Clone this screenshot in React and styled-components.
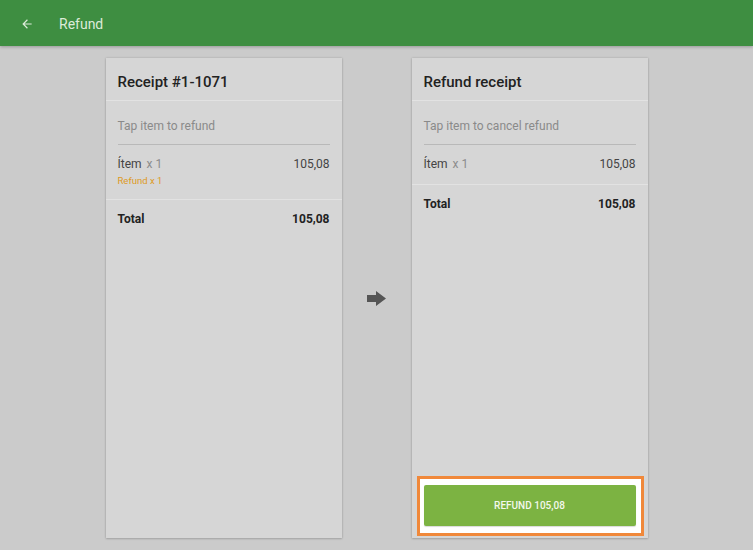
import styled, { createGlobalStyle } from "styled-components";

const GlobalStyle = createGlobalStyle`
  html, body {
    margin: 0;
    padding: 0;
    height: 100%;
    background: #cbcbcb;
    font-family: Roboto, "Noto Sans", "Liberation Sans", sans-serif;
  }
  #root {
    height: 100%;
  }
`;

const Page = styled.div`
  height: 550px;
  display: flex;
  flex-direction: column;
  background: #cbcbcb;
`;

const AppBar = styled.header`
  height: 46px;
  flex: none;
  background: #3e8e41;
  display: flex;
  align-items: center;
  padding: 2px 0 0 20px;
  box-sizing: border-box;
  box-shadow: 0 1px 3px rgba(0, 0, 0, 0.25);
  position: relative;
  z-index: 1;
`;

const BackButton = styled.div`
  width: 14px;
  height: 14px;
  display: flex;
  margin-right: 25px;
`;

const BarTitle = styled.h1`
  margin: 0;
  font-size: 14px;
  font-weight: 400;
  color: #dcebd9;
`;

const Main = styled.main`
  flex: 1;
  display: flex;
  justify-content: center;
  align-items: stretch;
  padding: 12px 0 12px;
`;

const Card = styled.section`
  width: 236px;
  background: #d6d6d6;
  box-shadow: 0 0 2px rgba(0, 0, 0, 0.18), 0 1px 2px rgba(0, 0, 0, 0.15);
  display: flex;
  flex-direction: column;
`;

const CardHeader = styled.div`
  height: 43px;
  box-sizing: border-box;
  display: flex;
  align-items: center;
  padding: 5px 12px 0;
  border-bottom: 1px solid #e2e2e2;
  font-size: 15px;
  font-weight: 500;
  color: #222;
`;

const Hint = styled.div`
  margin: 0 12px;
  height: 44px;
  display: flex;
  align-items: center;
  padding-top: 6px;
  box-sizing: border-box;
  border-bottom: 1px solid #b9b9b9;
  font-size: 12px;
  color: #8a8a8a;
`;

const ItemRow = styled.div`
  padding: 12px 12px 13px;
  border-bottom: 1px solid #e2e2e2;
`;

const Line = styled.div`
  display: flex;
  justify-content: space-between;
  line-height: 14px;
  font-size: 12px;
  color: ${(p) => (p.$bold ? "#222" : "#444")};
  font-weight: ${(p) => (p.$bold ? 700 : 400)};
`;

const Qty = styled.span`
  color: #8c8c8c;
  margin-left: 5px;
`;

const RefundNote = styled.div`
  margin-top: 5px;
  line-height: 10px;
  font-size: 9.5px;
  color: #de9a1e;
`;

const TotalRow = styled.div`
  padding: 12px 12px 10px;
`;

const Spacer = styled.div`
  flex: 1;
`;

const Footer = styled.div`
  padding: 12px;
`;

const ButtonWrap = styled.div`
  position: relative;
  isolation: isolate;

  &::before {
    content: "";
    position: absolute;
    top: -9px;
    left: -7px;
    right: -8px;
    bottom: -10px;
    background: #fff;
    border: 3px solid #f0883a;
    z-index: -1;
  }
`;

const RefundButton = styled.button`
  width: 100%;
  height: 41px;
  border: none;
  border-radius: 2px;
  background: #7cb342;
  color: #f3f8ec;
  font-family: inherit;
  font-size: 10px;
  font-weight: 500;
  box-shadow: 0 1px 1px rgba(0, 0, 0, 0.15);
`;

const Middle = styled.div`
  width: 70px;
  display: flex;
  align-items: center;
  justify-content: center;
`;

function BackArrow() {
  return (
    <svg width="14" height="14" viewBox="0 0 24 24">
      <path
        d="M20 11H7.83l5.59-5.59L12 4l-8 8 8 8 1.41-1.41L7.83 13H20v-2z"
        fill="#dcebd9"
      />
    </svg>
  );
}

function ForwardArrow() {
  return (
    <svg width="19" height="15" viewBox="0 0 19 15">
      <path d="M0 4h9V0l10 7.5L9 15v-4H0z" fill="#555" />
    </svg>
  );
}

function App() {
  return (
    <Page>
      <GlobalStyle />
      <AppBar>
        <BackButton>
          <BackArrow />
        </BackButton>
        <BarTitle>Refund</BarTitle>
      </AppBar>
      <Main>
        <Card>
          <CardHeader>Receipt #1-1071</CardHeader>
          <Hint>Tap item to refund</Hint>
          <ItemRow>
            <Line>
              <span>
                Ítem<Qty>x 1</Qty>
              </span>
              <span>105,08</span>
            </Line>
            <RefundNote>Refund x 1</RefundNote>
          </ItemRow>
          <TotalRow>
            <Line $bold>
              <span>Total</span>
              <span>105,08</span>
            </Line>
          </TotalRow>
        </Card>
        <Middle>
          <ForwardArrow />
        </Middle>
        <Card>
          <CardHeader>Refund receipt</CardHeader>
          <Hint>Tap item to cancel refund</Hint>
          <ItemRow>
            <Line>
              <span>
                Ítem<Qty>x 1</Qty>
              </span>
              <span>105,08</span>
            </Line>
          </ItemRow>
          <TotalRow>
            <Line $bold>
              <span>Total</span>
              <span>105,08</span>
            </Line>
          </TotalRow>
          <Spacer />
          <Footer>
            <ButtonWrap>
              <RefundButton>REFUND 105,08</RefundButton>
            </ButtonWrap>
          </Footer>
        </Card>
      </Main>
    </Page>
  );
}

export default App;
